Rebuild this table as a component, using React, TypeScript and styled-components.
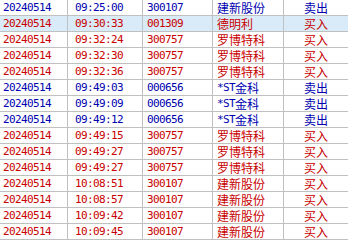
import React from "react";
import styled, { createGlobalStyle } from "styled-components";

type Trade = {
  date: string;
  time: string;
  code: string;
  name: string;
  side: "买入" | "卖出";
};

const trades: Trade[] = [
  { date: "20240514", time: "09:25:00", code: "300107", name: "建新股份", side: "卖出" },
  { date: "20240514", time: "09:30:33", code: "001309", name: "德明利", side: "买入" },
  { date: "20240514", time: "09:32:24", code: "300757", name: "罗博特科", side: "买入" },
  { date: "20240514", time: "09:32:30", code: "300757", name: "罗博特科", side: "买入" },
  { date: "20240514", time: "09:32:36", code: "300757", name: "罗博特科", side: "买入" },
  { date: "20240514", time: "09:49:03", code: "000656", name: "*ST金科", side: "卖出" },
  { date: "20240514", time: "09:49:09", code: "000656", name: "*ST金科", side: "卖出" },
  { date: "20240514", time: "09:49:12", code: "000656", name: "*ST金科", side: "卖出" },
  { date: "20240514", time: "09:49:15", code: "300757", name: "罗博特科", side: "买入" },
  { date: "20240514", time: "09:49:27", code: "300757", name: "罗博特科", side: "买入" },
  { date: "20240514", time: "09:49:27", code: "300757", name: "罗博特科", side: "买入" },
  { date: "20240514", time: "10:08:51", code: "300107", name: "建新股份", side: "买入" },
  { date: "20240514", time: "10:08:57", code: "300107", name: "建新股份", side: "买入" },
  { date: "20240514", time: "10:09:42", code: "300107", name: "建新股份", side: "买入" },
  { date: "20240514", time: "10:09:45", code: "300107", name: "建新股份", side: "买入" },
];

const GlobalStyle = createGlobalStyle`
  html, body {
    margin: 0;
    padding: 0;
    background: #ffffff;
  }
`;

const Table = styled.div`
  width: 348px;
  overflow: hidden;
  background: #ffffff;
`;

const Row = styled.div<{ $sell: boolean; $selected?: boolean }>`
  display: grid;
  grid-template-columns: 68px 75px 70px 71px 1fr;
  height: 16px;
  box-sizing: border-box;
  border-bottom: 1px solid #c0c0c0;
  background: ${(p) => (p.$selected ? "#d9ebf9" : "#ffffff")};
  color: ${(p) => (p.$sell ? "#0000b0" : "#c80000")};
`;

const Cell = styled.div<{ $pad: number; $center?: boolean }>`
  box-sizing: border-box;
  border-right: 1px solid #c0c0c0;
  padding-left: ${(p) => p.$pad}px;
  text-align: ${(p) => (p.$center ? "center" : "left")};
  white-space: nowrap;
  overflow: hidden;
  line-height: 15px;
  font-family: "DejaVu Sans Mono", "Noto Sans CJK SC", monospace;
  font-size: 11px;
  letter-spacing: -0.62px;

  &:last-child {
    border-right: none;
    padding-left: 0;
  }
`;

const CjkText = styled.span`
  font-family: "Noto Sans CJK SC", sans-serif;
  font-size: 12px;
  line-height: 15px;
  letter-spacing: 0;
  vertical-align: top;
`;

// split "*ST金科" so latin chars keep the 6px mono width
const renderName = (name: string) =>
  name.split(/([\u4e00-\u9fff]+)/).map((part, i) =>
    /[\u4e00-\u9fff]/.test(part) ? <CjkText key={i}>{part}</CjkText> : part
  );

const App = () => {
  return (
    <>
      <GlobalStyle />
      <Table>
        {trades.map((t, i) => (
          <Row key={i} $sell={t.side === "卖出"} $selected={i === 1}>
            <Cell $pad={3}>{t.date}</Cell>
            <Cell $pad={7}>{t.time}</Cell>
            <Cell $pad={4}>{t.code}</Cell>
            <Cell $pad={4}>{renderName(t.name)}</Cell>
            <Cell $pad={0} $center>
              <CjkText>{t.side}</CjkText>
            </Cell>
          </Row>
        ))}
      </Table>
    </>
  );
};

export default App;
